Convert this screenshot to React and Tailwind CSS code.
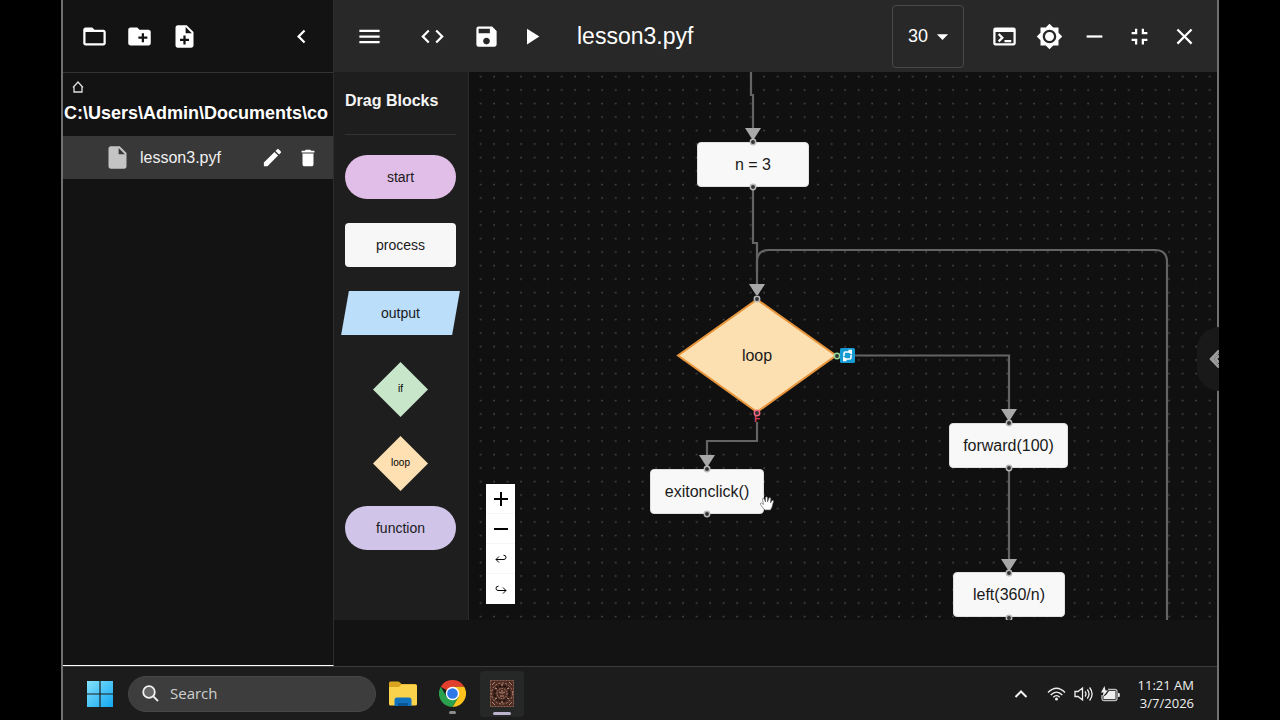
import React, { useState } from 'react';
import {
  MdFolderOpen, MdCreateNewFolder, MdNoteAdd, MdChevronLeft, MdInsertDriveFile, MdEdit, MdDelete,
  MdMenu, MdCode, MdSave, MdPlayArrow, MdArrowDropDown, MdTerminal, MdBrightness7, MdRemove,
  MdFullscreenExit, MdClose,
} from 'react-icons/md';

const IconButton = ({ label, icon: Icon, size = 27, className = 'w-[45px] h-[45px]' }) => (
  <button aria-label={label} className={`flex shrink-0 items-center justify-center text-white ${className}`}>
    <Icon size={size} />
  </button>
);

const Explorer = () => (
  <aside className="flex w-[271px] shrink-0 flex-col overflow-hidden border-r border-r-[#2c2c2c] border-b border-b-white bg-[#131313]">
    <div className="flex h-[73px] shrink-0 items-center border-b border-[#333333] px-[9px]">
      <IconButton label="Open folder" icon={MdFolderOpen} />
      <IconButton label="New folder" icon={MdCreateNewFolder} />
      <IconButton label="New file" icon={MdNoteAdd} />
      <div className="flex-1" />
      <IconButton label="Collapse" icon={MdChevronLeft} />
    </div>
    <div className="flex h-[63px] shrink-0 flex-col pt-1 pl-px">
      <button aria-label="Home" className="ml-1.5 flex h-5 w-4 items-center justify-center">
        <svg width="12" height="12" viewBox="0 0 12 12" fill="none" stroke="#e0e0e0" strokeWidth="1.3">
          <path d="M2 6v5h8V6M1 6.500L6 1l5 5.500" />
        </svg>
      </button>
      <span className="mt-1 text-[18px] leading-6 font-bold whitespace-nowrap text-white">C:\Users\Admin\Documents\co</span>
    </div>
    <div className="flex h-[43px] shrink-0 items-center bg-[#383838] pl-[41px]">
      <MdInsertDriveFile size={27} className="text-[#c4c4c4]" />
      <span className="ml-[9px] flex-1 text-base text-[#f0f0f0]">lesson3.pyf</span>
      <IconButton label="Rename" icon={MdEdit} size={23} className="h-9 w-[35px]" />
      <IconButton label="Delete" icon={MdDelete} size={22} className="mr-2 h-9 w-[35px]" />
    </div>
  </aside>
);

const Toolbar = () => {
  const [speed, setSpeed] = useState('30');
  return (
    <header className="flex h-[72px] shrink-0 items-center bg-[#282828] pr-[10px] pl-[13px]">
      <IconButton label="Menu" icon={MdMenu} />
      <IconButton label="Code" icon={MdCode} className="ml-[18px] h-[45px] w-[45px]" />
      <IconButton label="Save" icon={MdSave} className="ml-[9px] h-[45px] w-[45px]" />
      <IconButton label="Run" icon={MdPlayArrow} />
      <h1 className="ml-[23px] flex-1 text-[23px] text-white">lesson3.pyf</h1>
      <div className="relative mr-[18px] flex items-center">
        <select
          aria-label="Speed"
          value={speed}
          onChange={(e) => setSpeed(e.target.value)}
          className="h-[63px] w-[72px] appearance-none rounded border border-[#4a4a4a] bg-transparent pl-[15px] text-[18px] text-white"
        >
          <option>10</option>
          <option>20</option>
          <option>30</option>
        </select>
        <MdArrowDropDown size={27} className="pointer-events-none absolute right-2 text-white" />
      </div>
      <IconButton label="Console" icon={MdTerminal} />
      <IconButton label="Theme" icon={MdBrightness7} />
      <IconButton label="Minimize" icon={MdRemove} />
      <IconButton label="Restore" icon={MdFullscreenExit} />
      <IconButton label="Close" icon={MdClose} />
    </header>
  );
};

const DiamondBlock = ({ label, fill }) => (
  <button draggable className="relative flex h-[55px] w-[55px] items-center justify-center text-[10px] text-black">
    <svg className="absolute inset-0" width="55" height="55" viewBox="0 0 55 55">
      <path d="M27.5 0L55 27.5 27.5 55 0 27.5z" fill={fill} />
    </svg>
    <span className="relative">{label}</span>
  </button>
);

const Palette = () => (
  <div className="flex w-[135px] shrink-0 flex-col items-center border-r border-[#2a2a2a] bg-[#1e1e1e] pr-3 pl-[11px] text-sm text-[#1a1a1a]">
    <h2 className="mt-[17px] w-full text-base leading-6 font-bold text-[#f5f5f5]">Drag Blocks</h2>
    <div className="mt-[21px] h-px w-full bg-[#333333]" />
    <button draggable className="mt-5 h-11 w-full shrink-0 rounded-full bg-[#e1bee7]">start</button>
    <button draggable className="mt-6 h-11 w-full shrink-0 rounded bg-[#f7f7f7]">process</button>
    <button draggable className="relative mt-6 h-11 w-full shrink-0">
      <span className="absolute inset-0 -skew-x-[10deg] bg-[#bbdefb]" />
      <span className="relative">output</span>
    </button>
    <div className="mt-[27px] flex flex-col gap-[19px]">
      <DiamondBlock label="if" fill="#c8e6c9" />
      <DiamondBlock label="loop" fill="#ffe0b2" />
    </div>
    <button draggable className="mt-[15px] h-11 w-full shrink-0 rounded-full bg-[#d1c4e9]">function</button>
  </div>
);

const nodes = [
  { label: 'n = 3', place: 'left-[228px] top-[70px] w-28' },
  { label: 'exitonclick()', place: 'left-[181px] top-[397px] w-[114px]' },
  { label: 'forward(100)', place: 'left-[480px] top-[351px] w-[119px]' },
  { label: 'left(360/n)', place: 'left-[484px] top-[500px] w-28' },
];

const arrows = [[284, 57], [288, 213], [238, 384], [540, 338], [540, 488]];
const handles = [[284, 70], [284, 115], [288, 227], [238, 397], [238, 442], [540, 351], [540, 396], [540, 501], [540, 546]];

// All coordinates are relative to the canvas' top left corner
const Canvas = () => (
  <main className="relative flex-1 overflow-hidden bg-[#101010]">
    <svg className="absolute inset-0 h-full w-full">
      <defs>
        <pattern id="dots" width="13.5" height="13.5" patternUnits="userSpaceOnUse">
          <circle cx="11.7" cy="4.5" r="0.9" fill="#4a4a4a" />
        </pattern>
      </defs>
      <rect width="100%" height="100%" fill="url(#dots)" />
      <g fill="none" stroke="#646464" strokeWidth="2.2">
        <path d="M282 0v23h2v40" />
        <path d="M284 115v56h4v48" />
        <path d="M288 200v-10q0-12 12-12h386q12 0 12 12v360" />
        <path d="M386 283.500h154v58" />
        <path d="M288 350v19h-50v18" />
        <path d="M540 397v95" />
      </g>
      {arrows.map(([x, y]) => (
        <path key={`${x}-${y}`} d={`M${x - 8} ${y - 1}h16l-7 11h-2z`} fill="#a8a8a8" />
      ))}
      <path d="M288 227.500L367 283.500 288 340 209 283.500z" fill="#fde0b2" stroke="#e8943a" strokeWidth="2" />
    </svg>

    {nodes.map((node) => (
      <div
        key={node.label}
        className={`absolute flex h-[45px] items-center justify-center rounded border border-[#e0e0e0] bg-[#f8f8f8] text-base text-[#1a1a1a] ${node.place}`}
      >
        {node.label}
      </div>
    ))}
    <span className="absolute top-[272px] left-[248px] w-20 text-center text-base leading-6 text-[#1a1a1a]">loop</span>
    <span className="absolute top-[341px] left-[285px] text-[10px] leading-3 font-bold text-[#d8405a]">F</span>

    <svg className="absolute inset-0 h-full w-full" fill="#333333" strokeWidth="1.5">
      {handles.map(([x, y]) => (
        <circle key={`${x}-${y}`} cx={x} cy={y} r="2.7" stroke="#b8b8b8" />
      ))}
      <circle cx="368" cy="284" r="2.7" stroke="#8fdc9a" />
      <circle cx="288" cy="341" r="2.7" stroke="#ef6a80" />
    </svg>
    <svg className="absolute top-[276px] left-[371px]" width="15" height="15" viewBox="0 0 15 15">
      <rect width="15" height="15" rx="1.5" fill="#169bd5" />
      <g fill="none" stroke="#fff" strokeWidth="1.6">
        <path d="M4 8V5.500Q4 4 5.500 4H9.500M11 7v2.500Q11 11 9.500 11H5.500" />
      </g>
      <path d="M8.500 1.800h3.500v5L8.500 4.500zM6.500 13.200H3v-5L6.500 10.500z" fill="#fff" />
    </svg>

    <svg className="absolute top-[423px] left-[290px]" width="17" height="17" viewBox="0 0 17 17">
      <path
        d="M5 14L1.500 9.500Q1 8 2.500 8L4.500 9.500 3.500 4Q3.800 2.500 5 3.500L6.500 7V2.500Q7.500 1.200 8.500 2.500V7L10 3Q11.200 2 11.800 3.500L11.500 8 13 5.500Q14.500 4.800 14.500 6.500L13 12 11.500 15H6z"
        fill="#fff" stroke="#555" strokeWidth="0.6"
      />
    </svg>

    <div className="absolute bottom-4 left-[17px] flex w-[29px] flex-col divide-y divide-[#f6f6f6] bg-white text-black">
      <button aria-label="Zoom in" className="flex h-[30px] items-center justify-center">
        <svg width="14" height="14" viewBox="0 0 14 14" stroke="currentColor" strokeWidth="2"><path d="M0 7h14M7 0v14" /></svg>
      </button>
      <button aria-label="Zoom out" className="flex h-[30px] items-center justify-center">
        <svg width="14" height="14" viewBox="0 0 14 14" stroke="currentColor" strokeWidth="2"><path d="M0 7h14" /></svg>
      </button>
      <button aria-label="Undo" className="flex h-[30px] items-center justify-center">
        <svg width="12" height="9" viewBox="0 0 12 9" fill="none" stroke="currentColor"><path d="M4 2.500L1 5.500l3 3M1 5.500h8Q11 5.300 11 3.300 11 1.200 8.500 1.200" /></svg>
      </button>
      <button aria-label="Redo" className="flex h-[30px] items-center justify-center">
        <svg width="12" height="9" viewBox="0 0 12 9" fill="none" stroke="currentColor"><path d="M8 2.500l3 3-3 3M11 5.500H3Q1 5.300 1 3.300 1 1.200 3.500 1.200" /></svg>
      </button>
    </div>
  </main>
);

const WindowsLogo = () => (
  <svg width="26" height="26" viewBox="0 0 26 26">
    <defs>
      <linearGradient id="win" x1="0" y1="0" x2="1" y2="1">
        <stop offset="0" stopColor="#84e2fc" />
        <stop offset="1" stopColor="#12a6f0" />
      </linearGradient>
    </defs>
    <path d="M0 0h12.400v12.400H0zM13.600 0H26v12.400H13.600zM0 13.600h12.400V26H0zM13.600 13.600H26V26H13.600z" fill="url(#win)" />
  </svg>
);

const FolderLogo = () => (
  <svg width="28" height="26" viewBox="0 0 28 26">
    <path d="M0 2q0-1.500 1.500-1.500h7.500q1 0 1.700 .8L12.500 3H26q2 0 2 1.500V9H0z" fill="#d9a520" />
    <path d="M0 6h10l2.500-2.500H26q2 0 2 2V23q0 1.500-1.500 1.500h-25Q0 24.500 0 23z" fill="#fbd24b" />
    <path d="M5.500 25v-6q0-2.500 2.500-2.500h12q2.500 0 2.500 2.500v6z" fill="#1173bd" />
    <path d="M9 25v-2q0-1 1-1h8q1 0 1 1v2z" fill="#0a5692" />
  </svg>
);

const ChromeLogo = () => (
  <svg width="27" height="27" viewBox="0 0 48 48">
    <path d="M24 24L3.200 12A24 24 0 0 1 44.800 12H24z" fill="#e2402f" />
    <path d="M24 24V12h20.800A24 24 0 0 1 24 48l10.400-18z" fill="#fcc31e" />
    <path d="M24 24l10.400 6L24 48A24 24 0 0 1 3.200 12l10.400 18z" fill="#2aa14c" />
    <circle cx="24" cy="24" r="12" fill="#fff" />
    <circle cx="24" cy="24" r="9.5" fill="#2f78e8" />
  </svg>
);

const CarvedLogo = () => (
  <svg width="24" height="27" viewBox="0 0 24 27" fill="none">
    <rect width="24" height="27" fill="#4a2c23" />
    <g stroke="#b98572">
      <rect x="0.5" y="0.5" width="23" height="26" stroke="#8e6052" strokeDasharray="2 1" />
      <circle cx="12" cy="13.5" r="10.5" strokeDasharray="2 1.5" />
      <circle cx="12" cy="13.5" r="7.5" stroke="#27140f" strokeWidth="2" strokeDasharray="3 1" />
      <circle cx="12" cy="13.5" r="5" strokeDasharray="1.5 1" />
      <path d="M2 5l3-3M19 2l3 3M2 22l3 3M19 25l3-3M9 12l2 1M13 13l2-1M10 16h4M12 10v4" />
      <path d="M5 8l2 1M17 9l2-1M5 19l2-1M17 18l2 1M12 4v2M12 21v2" stroke="#d8a896" />
    </g>
  </svg>
);

const Taskbar = () => (
  <footer className="flex h-[54px] shrink-0 items-center border-t border-[#3c3c3c] bg-[#1c1c1c] pr-[23px] pl-6">
    <button aria-label="Start"><WindowsLogo /></button>
    <label className="ml-[15px] flex h-9 w-[248px] items-center rounded-full border border-[#464646] bg-[#3d3d3d] pl-[13px]">
      <svg width="17" height="17" viewBox="0 0 17 17" fill="none" stroke="#f0f0f0" strokeWidth="1.8">
        <circle cx="7" cy="7" r="5.8" fill="#666666" />
        <path d="M11.300 11.300L16 16" />
      </svg>
      <input
        aria-label="Search"
        placeholder="Search"
        className="ml-[11px] w-40 bg-transparent font-['Open_Sans',sans-serif] text-[15px] outline-none placeholder:text-[#d0d0d0]"
      />
    </label>
    <button aria-label="File Explorer" className="ml-[13px]"><FolderLogo /></button>
    <button aria-label="Chrome" className="relative ml-[22px]">
      <ChromeLogo />
      <span className="absolute -bottom-[7px] left-[10px] h-[3px] w-[7px] rounded-full bg-[#8c8c8c]" />
    </button>
    <button aria-label="Flowchart editor" className="relative ml-[14px] flex h-[46px] w-11 items-center justify-center rounded bg-[#262827]">
      <CarvedLogo />
      <span className="absolute bottom-0.5 left-[13px] h-[3px] w-[18px] rounded-full bg-[#bcb4cc]" />
    </button>
    <div className="flex-1" />
    <button aria-label="Hidden icons">
      <svg width="14" height="8" viewBox="0 0 14 8" fill="none" stroke="#f0f0f0" strokeWidth="2"><path d="M1.500 7L7 1.500 12.500 7" /></svg>
    </button>
    <button aria-label="Network, volume and battery" className="ml-[19px] flex items-center gap-2 text-[#eeeeee]">
      <svg width="19" height="14" viewBox="0 0 19 14" fill="none" stroke="currentColor" strokeWidth="1.4">
        <path d="M1 5.500Q9.500-3 18 5.500M3.700 8Q9.500 2.200 15.300 8M6.300 10.300Q9.500 7 12.700 10.300" />
        <circle cx="9.5" cy="12" r="1.5" fill="currentColor" stroke="none" />
      </svg>
      <svg width="19" height="16" viewBox="0 0 19 16" fill="none" stroke="currentColor" strokeWidth="1.3">
        <path d="M1 5.500h3L8.500 2v12L4 10.500H1zM11 5.500q2 2.500 0 5M13.300 3.500q3.500 4.500 0 9M15.600 1.500q5 6.500 0 13" />
      </svg>
      <svg width="19" height="16" viewBox="0 0 19 16">
        <path d="M7 3.500h7q2 0 2 2v7q0 2-2 2H3q-2 0-2-2V9" fill="none" stroke="#bbbbbb" strokeWidth="1.3" />
        <path d="M8 5h6.500v8H2.500V10.500L5 9zM17 7h1q.8 0 .8 1v2q0 1-.8 1h-1zM3.500 0L0 6.500h2.500L1.500 11 7 4.500H4.500z" fill="currentColor" />
      </svg>
    </button>
    <time className="ml-[18px] text-right font-['Open_Sans',sans-serif] text-[13px] leading-[18px] text-[#f0f0f0]">
      11:21 AM<br />3/7/2026
    </time>
  </footer>
);

const App = () => (
  <div className="h-screen bg-black px-[61px] font-['Liberation_Sans',Arial,sans-serif]">
    <div className="relative h-full">
      <div className="flex h-full flex-col overflow-hidden border-x-2 border-[#707070] bg-[#131313]">
        <div className="flex min-h-0 flex-1">
          <Explorer />
          <div className="flex min-w-0 flex-1 flex-col">
            <Toolbar />
            <div className="flex min-h-0 flex-1 pb-[46px]">
              <Palette />
              <Canvas />
            </div>
          </div>
        </div>
        <Taskbar />
      </div>
      <button aria-label="Open side panel" className="absolute top-[327px] right-0 flex h-16 w-[22px] items-center justify-end rounded-l-full bg-[#191919]">
        <svg width="10" height="20" viewBox="0 0 10 20" fill="none" stroke="#a0a0a0" strokeWidth="2.5">
          <path d="M10 1.500L2 10l8 8.500M10 6.500L6.500 10l3.500 3.500" />
          <path d="M10 4L4 10l6 6" strokeWidth="1" />
        </svg>
      </button>
    </div>
  </div>
);

export default App;
